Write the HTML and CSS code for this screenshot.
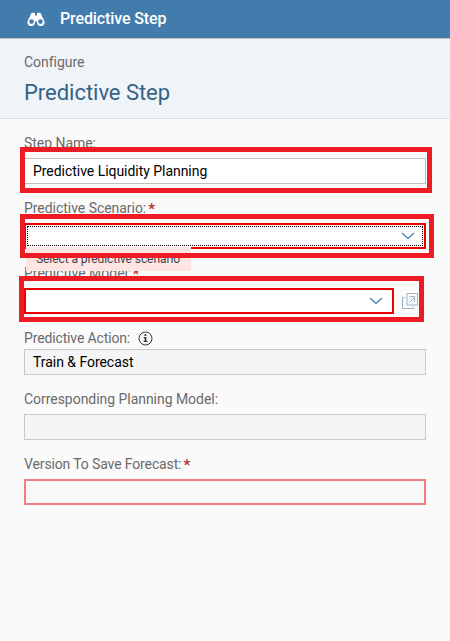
FILE: index.html
```html
<!DOCTYPE html>
<html lang="en">
<head>
<meta charset="utf-8">
<title>Predictive Step</title>
<link rel="stylesheet" href="styles.css">
</head>
<body>
<header class="topbar">
  <svg class="binoculars" width="18" height="14" viewBox="0 0 18 14">
    <path fill="#fff" fill-rule="evenodd" d="M4 2Q4 .8 5.500 .8H7Q8 .8 8 2V3.500H10V2Q10 .8 11 .8H12.500Q14 .8 14 2L16.800 8A3.800 3.800 0 1 1 10 10.500Q9.800 9 9 9Q8.200 9 8 10.500A3.800 3.800 0 1 1 1.200 8ZM4.500 7.300A2.300 2.300 0 1 0 4.500 11.900A2.300 2.300 0 1 0 4.500 7.300ZM13.500 7.300A2.300 2.300 0 1 0 13.500 11.900A2.300 2.300 0 1 0 13.500 7.300Z"/>
  </svg>
  <span class="topbar-title">Predictive Step</span>
</header>
<section class="heading">
  <div class="crumb">Configure</div>
  <h1>Predictive Step</h1>
</section>
<main class="form">
  <div class="group">
    <label class="label"><span>Step Name:</span></label>
    <div class="field"><span>Predictive Liquidity Planning</span></div>
    <div class="mark mark-name"></div>
  </div>
  <div class="group">
    <label class="label"><span>Predictive Scenario:</span><b class="req">*</b></label>
    <div class="field error focused">
      <svg class="chevron" width="14" height="8" viewBox="0 0 14 8"><path d="M1 1L7 6.500L13 1" fill="none" stroke="#427cac" stroke-width="1.200"/></svg>
    </div>
    <div class="tooltip"><span>Select a predictive scenario</span></div>
    <div class="mark mark-scenario"></div>
  </div>
  <div class="group">
    <label class="label model"><span>Predictive Model:</span><b class="req">*</b></label>
    <div class="row">
      <div class="field error">
        <svg class="chevron" width="14" height="8" viewBox="0 0 14 8"><path d="M1 1L7 6.500L13 1" fill="none" stroke="#427cac" stroke-width="1.200"/></svg>
      </div>
      <svg class="open" width="17" height="17" viewBox="0 0 17 17" fill="none" stroke="#9db4c8"><path d="M5 .5H15.500V12H5ZM2.500 4.500H.5V15.500H11.500V14M7.500 9.500L12 5M7.500 3.500H12.500V9"/></svg>
    </div>
    <div class="mark mark-model"></div>
  </div>
  <div class="group action">
    <label class="label"><span>Predictive Action:</span>
      <svg class="info" width="15" height="15" viewBox="0 0 15 15"><circle cx="7.500" cy="7.500" r="6.500" fill="none" stroke="#333"/><path d="M6.500 3.300H8.400V5H6.500ZM5.700 6H8.400V10H9.500V11H5.500V10H6.600V7H5.700Z" fill="#333"/></svg>
    </label>
    <div class="field disabled"><span>Train &amp; Forecast</span></div>
  </div>
  <div class="group">
    <label class="label"><span>Corresponding Planning Model:</span></label>
    <div class="field disabled"></div>
  </div>
  <div class="group">
    <label class="label version"><span>Version To Save Forecast:</span><b class="req">*</b></label>
    <div class="field disabled invalid"></div>
  </div>
</main>
</body>
</html>
```
FILE: styles.css
```css
* { box-sizing: border-box; }
body {
  margin: 0;
  height: 641px;
  background: #fafafa;
  font: 14px/18px Roboto, "Open Sans", sans-serif;
  letter-spacing: -.04px;
  color: #6a6a6a;
  overflow: hidden;
}
span { white-space: nowrap; }
.topbar {
  display: flex;
  align-items: center;
  height: 39px;
  padding-left: 27px;
  background: #427cac;
  border-bottom: 1px solid #c5c0bd;
}
.binoculars { margin-right: 15px; }
.topbar-title { color: #fff; font-size: 16px; font-weight: 500; letter-spacing: -.12px; }
.heading {
  height: 80px;
  padding: 14px 24px 0;
  background: #eff4f8;
  border-bottom: 1px solid #d1e0f0;
}
.crumb { height: 18px; }
h1 { margin: 7px 0 0; font-size: 22px; line-height: 30px; font-weight: 400; color: #346187; letter-spacing: -.03px; }
.form { padding: 15px 24px 0; }
.group { position: relative; height: 65px; }
.label { display: flex; height: 24px; line-height: 18px; }
.model { letter-spacing: 0; }
.version { letter-spacing: -.13px; }
.req { color: #b93030; margin-left: 2px; font-size: 15px; line-height: 20px; }
.model .req { margin-left: 1px; }
.field {
  display: flex;
  align-items: center;
  width: 402px;
  height: 26px;
  padding-left: 8px;
  background: #fff;
  border: 1px solid #bfbfbf;
  color: #000;
}
.field.error { position: relative; border: 2px solid #e00; justify-content: flex-end; padding-right: 9px; }
.focused::after {
  content: "";
  position: absolute;
  inset: 1px;
  border: 1px dotted #000;
}
.row { display: flex; align-items: center; }
.row .field { width: 370px; }
.open { margin-left: 8px; }
.group.action { height: 61px; }
.action .label { height: 20px; align-items: flex-start; letter-spacing: -.14px; }
.info { margin: 2px 0 0 8px; }
.field.disabled { background: #f5f5f5; border-color: #c8c8c8; }
.field.invalid { background: #f8f8f8; border: 2px solid #f08080; }
.mark { position: absolute; border: 5px solid #ed1c24; z-index: 3; }
.mark-name { left: -4px; top: 13px; width: 412px; height: 46px; }
.mark-scenario { left: -4px; top: 15px; width: 414px; height: 44px; }
.mark-model { left: -5px; top: 12px; width: 405px; height: 46px; }
.tooltip {
  position: absolute;
  z-index: 2;
  left: 2px;
  top: 48px;
  width: 165px;
  height: 24px;
  padding-left: 10px;
  background: #ffe4e4;
  color: #444;
  font-size: 12px;
  line-height: 24px;
  letter-spacing: -.08px;
}
```
